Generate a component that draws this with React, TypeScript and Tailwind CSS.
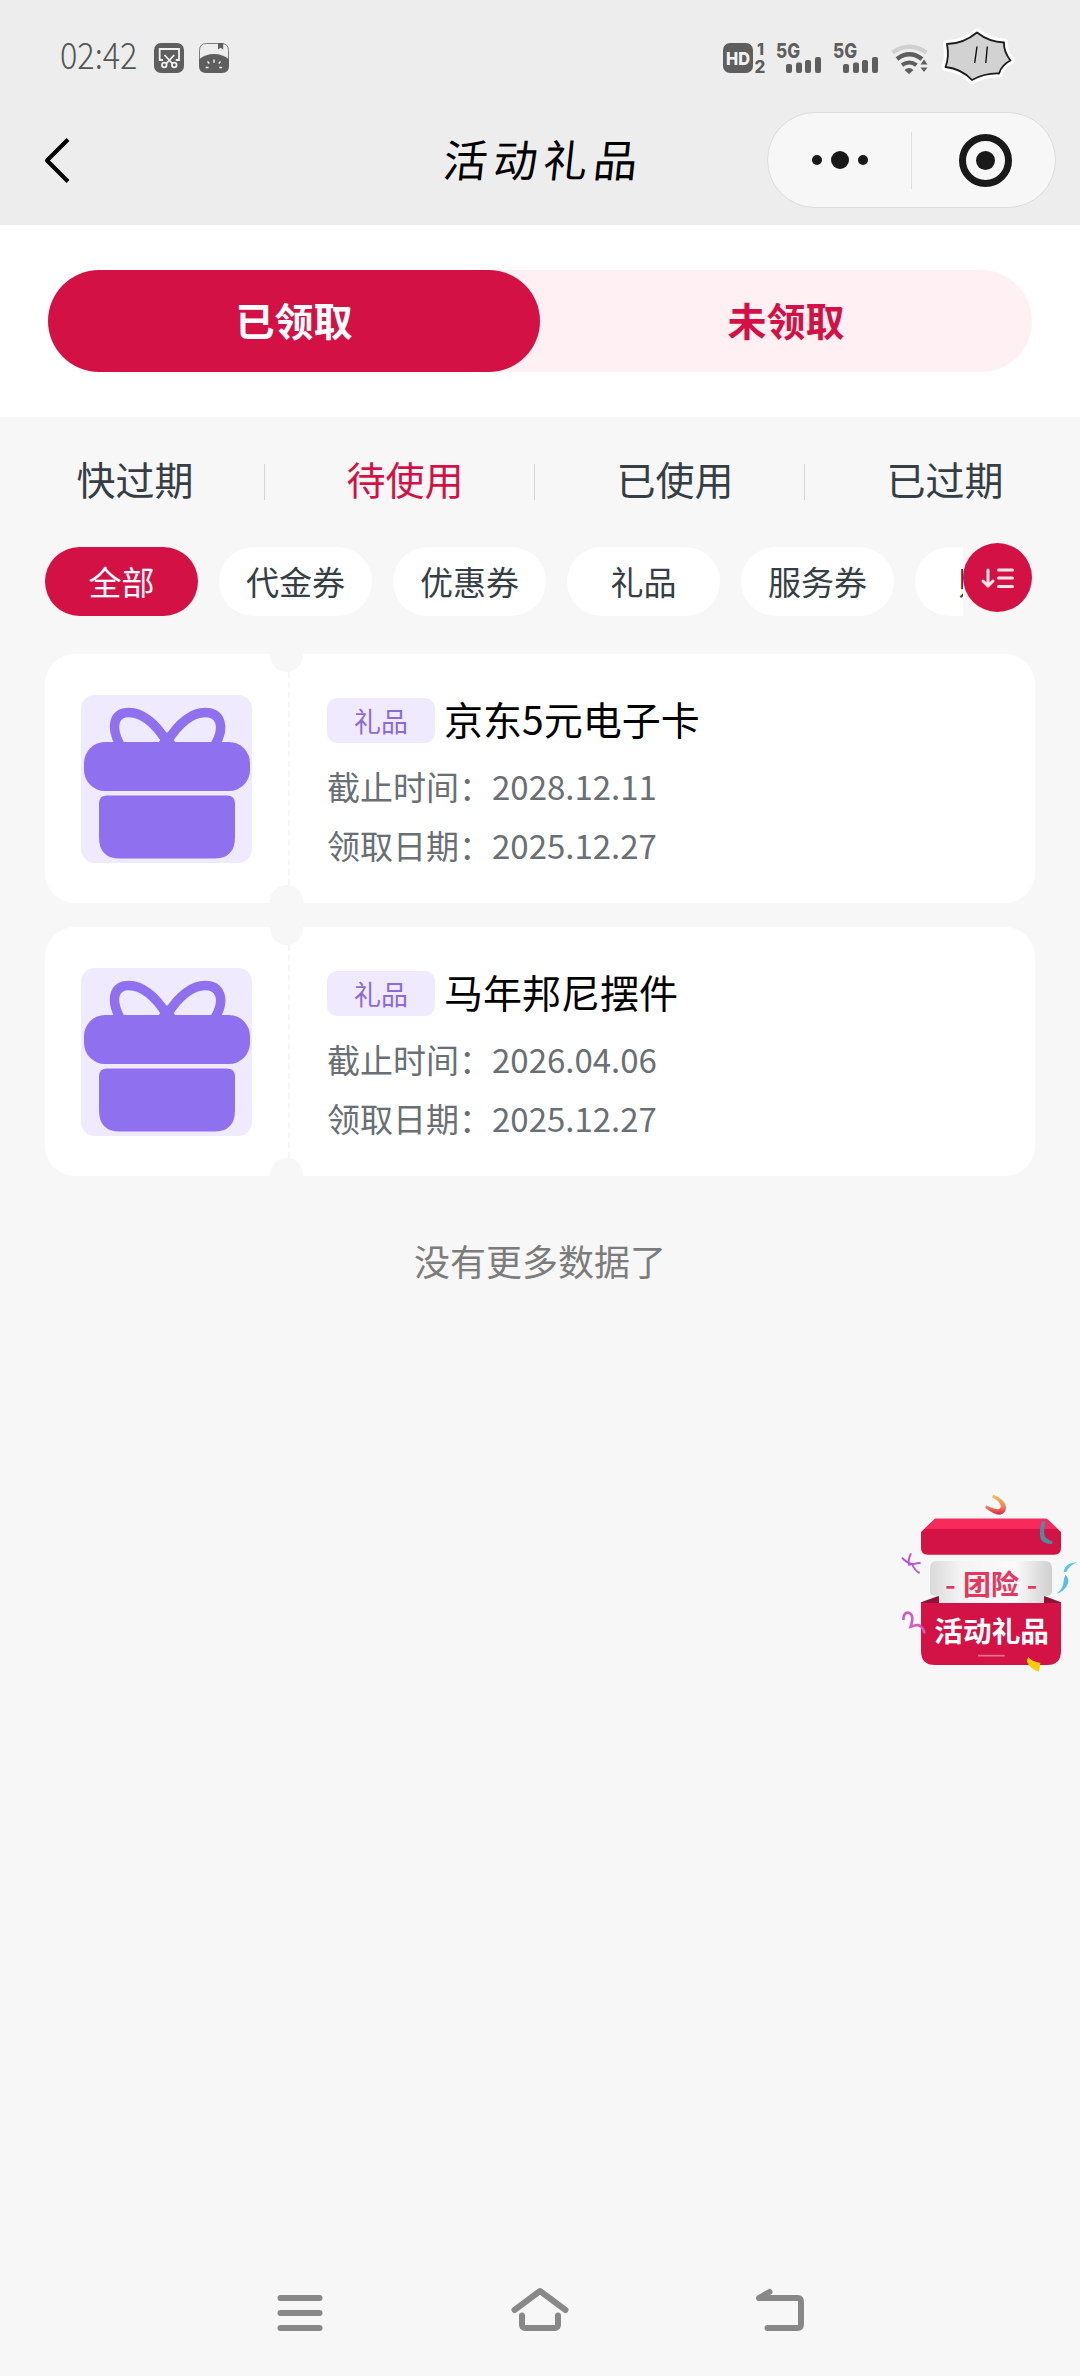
import React from 'react';

const mainTabs = ['已领取', '未领取'];
const statusTabs = ['快过期', '待使用', '已使用', '已过期'];
const categories = ['全部', '代金券', '优惠券', '礼品', '服务券', '购物'];

const gifts = [
  { tag: '礼品', title: '京东5元电子卡', deadline: '2028.12.11', received: '2025.12.27' },
  { tag: '礼品', title: '马年邦尼摆件', deadline: '2026.04.06', received: '2025.12.27' }
];

const StatusBar = () => (
  <div className="h-[112px] flex items-start justify-between pl-[60px] pr-[65px]">
    <div className="flex pt-[35px]">
      <div className="w-[93px] h-[38px] shrink-0">
        <span className="block w-fit origin-left scale-x-[0.9] text-[36px] leading-[36px] font-light text-[#555555]">
          02:42
        </span>
      </div>
      <svg className="mt-[7px]" width="78" height="34" viewBox="152 42 78 34" fill="none">
        <rect x="153" y="43" width="30" height="30" rx="7" fill="#5e5e5e" />
        <g stroke="#f2f2f2" strokeWidth="1.8">
          <path d="M162 60h-3.3V49H178v11h-3.3" />
          <path d="M163.500 55l7.800 8.500M173.200 55l-7.800 8.500" />
          <circle cx="163.300" cy="65" r="2.300" />
          <circle cx="173.300" cy="65" r="2.300" />
        </g>
        <path d="M198.500 62v-11.500q0-7 7-7h15q7 0 7 7V62" stroke="#5e5e5e" strokeWidth="0.8" />
        <path d="M217 43h5.200v6.500l-2.600-1.800-2.600 1.800z" fill="#5e5e5e" />
        <path d="M198 59.500q6-5.500 15-5.500t15 5.500V66q0 7-7 7h-16q-7 0-7-7z" fill="#5e5e5e" />
        <path
          d="M213 59.500v3.300M206.500 61.500l1.800 2M219.500 61.500l-1.800 2M204.700 67.500h2.800M218.300 67.500h2.800"
          stroke="#f2f2f2"
          strokeWidth="1.500"
        />
      </svg>
    </div>

    <svg className="mt-[28px]" width="295" height="58" viewBox="720 28 295 58" fill="none">
      <rect x="723" y="43" width="30" height="30" rx="7" fill="#5e5e5e" />
      <g fontFamily="Inter, sans-serif" fontWeight="800">
        <text x="726" y="64.500" fontSize="18" fill="#f2f2f2" textLength="24" lengthAdjust="spacingAndGlyphs">HD</text>
        <g fill="#5e5e5e">
          <text x="757" y="55" fontSize="16" textLength="7" lengthAdjust="spacingAndGlyphs">1</text>
          <text x="754.500" y="72.500" fontSize="17">2</text>
        </g>
      </g>
      {[0, 57].map((shift) => (
        <g key={shift} transform={`translate(${shift} 0)`} fill="#5e5e5e">
          <text
            x="776"
            y="57.500"
            fontSize="20"
            fontFamily="Inter, sans-serif"
            fontWeight="800"
            textLength="24"
            lengthAdjust="spacingAndGlyphs"
          >
            5G
          </text>
          <rect x="786" y="64" width="6" height="9" rx="2" />
          <rect x="796" y="62.500" width="6" height="10.500" rx="2" />
          <rect x="805" y="60" width="6" height="13" rx="2" />
          <rect x="815" y="57" width="6" height="16" rx="2" />
        </g>
      ))}
      <path d="M892.500 52.500q17-11.500 34 0" stroke="#d0d0d0" strokeWidth="4.500" />
      <path d="M897 59q12.300-9.500 25 0" stroke="#5e5e5e" strokeWidth="4.500" />
      <path d="M902 65.200q7.300-5.500 14.500 0" stroke="#5e5e5e" strokeWidth="4" />
      <path d="M904.500 70q4.500-4 9 0l-4.500 4z" fill="#5e5e5e" />
      <path d="M924 59.500l3.500 5h-7zM924 72l3.500-4.500h-7z" fill="#5e5e5e" />
      <path
        d="M977 32.500q12 9.500 27 10-.5 9 6.500 18-8.500 4-11.500 13-14-.5-27 6.500-10-11-26.500-13 4-10 1.500-23 16 0 30-11.500z"
        stroke="#ffffff"
        strokeWidth="8"
        strokeLinejoin="round"
      />
      <path
        d="M977 32.500q12 9.500 27 10-.5 9 6.500 18-8.500 4-11.500 13-14-.5-27 6.500-10-11-26.500-13 4-10 1.500-23 16 0 30-11.500z"
        fill="#d2d2d2"
        stroke="#1c1c1c"
        strokeWidth="1.800"
        strokeLinejoin="round"
      />
      <path d="M977 46.500l-2.300 16.500M987.300 46.500l-1.500 16.500" stroke="#111111" strokeWidth="1.400" />
    </svg>
  </div>
);

const Header = () => (
  <header className="h-[225px] bg-[#ededed]">
    <StatusBar />
    <div className="h-24 grid grid-cols-[1fr_auto_1fr] items-center">
      <svg className="ml-[42px]" width="32" height="48" viewBox="0 0 32 48" fill="none">
        <path d="M26 3.500L5 24.500l21 21" stroke="#000000" strokeWidth="4" strokeLinejoin="round" />
      </svg>
      <h1 className="-mt-1 pl-2 text-[44px] leading-[60px] tracking-[6px] text-black -skew-x-6">活动礼品</h1>
      <div className="justify-self-end mr-6 w-[289px] h-24 flex items-center rounded-full border border-[#dcdcdc] bg-[#f7f7f7]">
        <div className="w-[143px] flex items-center justify-center gap-[9px]">
          <span className="size-[10px] rounded-full bg-[#191919]"></span>
          <span className="size-[18px] rounded-full bg-[#191919]"></span>
          <span className="size-[10px] rounded-full bg-[#191919]"></span>
        </div>
        <div className="w-px h-[57px] bg-[#dedede]"></div>
        <div className="flex-1 flex justify-center pl-1">
          <div className="size-[53px] rounded-full border-[7px] border-[#191919] flex items-center justify-center">
            <span className="size-[19px] rounded-full bg-[#191919]"></span>
          </div>
        </div>
      </div>
    </div>
  </header>
);

const GiftIcon = () => (
  <div className="w-[171px] h-[168px] rounded-[14px] bg-[#efeafd] overflow-hidden">
    <svg width="171" height="168" viewBox="0 0 171 168" fill="none">
      <path
        d="M39 50C29 31 33 17.500 48 17.500C60 17.500 74 27 86 47C98 27 112 17.500 124 17.500C139 17.500 145 31 134 50"
        stroke="#8f70ee"
        strokeWidth="9.500"
      />
      <path d="M77 48l9-11 9 11z" fill="#8f70ee" />
      <rect x="3" y="47" width="166" height="49" rx="21" fill="#8f70ee" />
      <path d="M26 100.500h120q8 0 8 8v34q0 21-21 21H39q-21 0-21-21v-34q0-8 8-8z" fill="#8f70ee" />
    </svg>
  </div>
);

const GiftCard = ({ gift }: { gift: (typeof gifts)[number] }) => (
  <div className="relative h-[249px] flex rounded-[30px] bg-white overflow-hidden">
    <div className="w-[245px] my-[18px] pl-9 flex items-center border-r-2 border-dashed border-[#f6f6f6]">
      <GiftIcon />
    </div>
    <span className="absolute left-[225px] -top-[15px] size-[33px] rounded-full bg-[#f7f7f7]"></span>
    <span className="absolute left-[225px] -bottom-[15px] size-[33px] rounded-full bg-[#f7f7f7]"></span>
    <div className="flex-1 pl-[37px] pt-[37px]">
      <div className="flex items-center h-[58px]">
        <span className="w-[108px] h-[45px] flex items-center justify-center rounded-[10px] bg-[#efeafd] text-[27px] leading-none text-[#8e6ad6]">
          {gift.tag}
        </span>
        <span className="ml-[9px] -mt-1 text-[39px] leading-[58px] text-black">{gift.title}</span>
      </div>
      <p className="mt-2 text-[33px] leading-[59px] text-[#6a6f73]">截止时间：{gift.deadline}</p>
      <p className="text-[33px] leading-[59px] text-[#6a6f73]">领取日期：{gift.received}</p>
    </div>
  </div>
);

const FloatingGift = () => (
  <svg className="absolute left-[880px] top-[1480px]" width="200" height="210" viewBox="0 0 600 630" fill="none">
    <defs>
      <linearGradient id="paper" x1="0" x2="1" y1="0" y2="0">
        <stop offset="0" stopColor="#d9d9d9" />
        <stop offset="0.250" stopColor="#f4f4f4" />
        <stop offset="0.700" stopColor="#fafafa" />
        <stop offset="1" stopColor="#cfcfcf" />
      </linearGradient>
      <linearGradient id="ribbon" x1="0" x2="0" y1="0" y2="1">
        <stop offset="0" stopColor="#fbc04a" />
        <stop offset="0.600" stopColor="#f0805a" />
        <stop offset="1" stopColor="#d9214a" />
      </linearGradient>
    </defs>
    <path d="M165 116h335l43 40v48q0 20-20 20H143q-20 0-20-20v-48z" fill="#d31245" />
    <path d="M165 116h335l32 31H134z" fill="#f82a5c" />
    <path d="M123 367l54-20v30h-54zM543 367l-52-20v30h52z" fill="#8f1236" />
    <path d="M172 243h322q22 0 22 22v70q0 12-24 14v24H177v-24q-27-2-27-14v-70q0-22 22-22z" fill="url(#paper)" />
    <path d="M123 368l54 1h314l52-1v145q0 42-42 42H165q-42 0-42-42z" fill="#d31245" />
    <g fontFamily="'Noto Sans CJK SC', sans-serif" fontWeight="700" textAnchor="middle">
      <text x="333" y="345" fontSize="84" fill="#e8365f">团险</text>
      <text x="335" y="486" fontSize="86" fill="#ffffff">活动礼品</text>
    </g>
    <path d="M199 322h24M444 322h24" stroke="#e8365f" strokeWidth="8" />
    <path d="M294 527h80" stroke="#f0708f" strokeWidth="5" />
    <path
      d="M340 44q36 14 38 38 0 20-18 22-14 2-44-20l2-8q24 12 38 12 8-4 6-12-4-14-26-24z"
      fill="url(#ribbon)"
    />
    <path d="M486 124h11q-8 32-2 46 6 8 23 14l-2 8q-26 0-34-16-6-24 4-52z" fill="#4d8ca3" />
    <path d="M593 247q-24 8-34 29l-8 0q4-28 42-29z" fill="#5fc4e8" />
    <path d="M556 284q12 10 8 26-8 22-34 32 18-18 20-30 0-14 6-28z" fill="#55bfe6" />
    <path d="M93 220q-10 20-6 34l35-6M66 233q14 16 30 19 8 20 23 27" stroke="#b455dc" strokeWidth="6" />
    <path d="M70 420q0-24 16-22 18 5 6 42 22-8 28-2 12 8 13 22" stroke="#d45cbd" strokeWidth="8" />
    <path d="M445 531q10 14 36 18l-4 26q-28-8-37-32z" fill="#fccb0a" />
  </svg>
);

const SystemNav = () => (
  <svg className="mt-auto" width="1080" height="116" viewBox="0 2260 1080 116" fill="none">
    <g stroke="#888888" strokeWidth="6" strokeLinecap="round" strokeLinejoin="round">
      <path d="M280.500 2298h39M280.500 2313h39M280.500 2328h39" />
      <path d="M514.500 2310l25.500-19 25.500 19M522 2315.500v9q0 3.500 3.500 3.500h29q3.500 0 3.500-3.500v-9" />
      <path d="M767.500 2328h30q3.500 0 3.500-4v-22q0-4-3.500-4H759l10.500-6" />
    </g>
  </svg>
);

const App = () => {
  return (
    <div className="relative w-[1080px] h-[2376px] flex flex-col bg-[#f7f7f7] overflow-hidden font-['Noto_Sans_CJK_SC',sans-serif]">
      <Header />

      <div className="h-48 px-12 pt-[45px] bg-white">
        <div className="h-[102px] flex rounded-full bg-[#fff0f4]">
          {mainTabs.map((tab, index) => (
            <div
              key={tab}
              className={`flex-1 flex items-center justify-center pb-[3px] rounded-full text-[39px] leading-none font-bold ${
                index === 0 ? 'bg-[#d31145] text-white' : 'text-[#d31145]'
              }`}
            >
              {tab}
            </div>
          ))}
        </div>
      </div>

      <div className="h-[130px] grid grid-cols-4 items-center">
        {statusTabs.map((tab, index) => (
          <div key={tab} className="flex items-center">
            <span
              className={`w-[264px] pl-1.5 pb-2 text-center text-[39px] leading-[58px] ${
                index === 1 ? 'text-[#d31145]' : 'text-[#363e45]'
              }`}
            >
              {tab}
            </span>
            {index < 3 && <span className="w-px h-9 bg-[#d4d4d4]"></span>}
          </div>
        ))}
      </div>

      <div className="h-[69px] flex pl-[45px]">
        <div className="w-[918px] flex gap-[21px] overflow-hidden">
          {categories.map((category, index) => (
            <span
              key={category}
              className={`w-[153px] h-[69px] shrink-0 flex items-center justify-center rounded-full text-[33px] leading-none ${
                index === 0 ? 'bg-[#d31145] text-white' : 'bg-white text-[#363e45]'
              }`}
            >
              {category}
            </span>
          ))}
        </div>
        <div className="-mt-1 size-[69px] flex items-center justify-center rounded-full bg-[#d31145]">
          <svg width="36" height="24" viewBox="0 0 36 24" fill="none" stroke="#fbe6ec" strokeWidth="3" strokeLinecap="round" strokeLinejoin="round">
            <path d="M8 4v16M3 15l5 5 5-5M18.500 4h14M18.500 12h14M18.500 20.500h14" />
          </svg>
        </div>
      </div>

      <main className="mt-[38px] px-[45px] flex flex-col gap-6">
        {gifts.map((gift) => (
          <GiftCard key={gift.title} gift={gift} />
        ))}
      </main>

      <p className="mt-[58px] text-center text-[36px] leading-[52px] text-[#7c7c7c]">没有更多数据了</p>

      <FloatingGift />
      <SystemNav />
    </div>
  );
};

export default App;
